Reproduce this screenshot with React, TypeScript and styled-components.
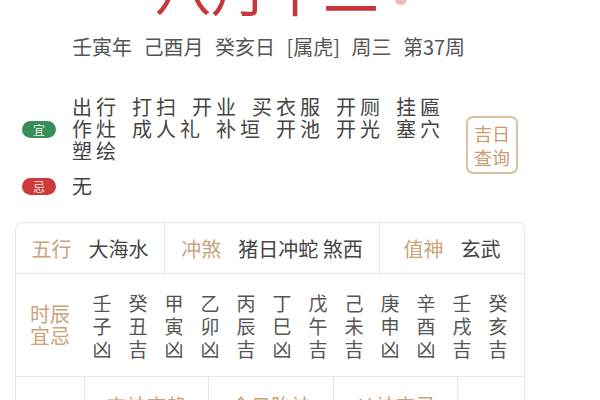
import React from "react";
import styled, { createGlobalStyle } from "styled-components";

const Global = createGlobalStyle`
  html, body { margin: 0; padding: 0; background: #ffffff; }
  body { font-family: "Noto Sans CJK SC", "Noto Sans", sans-serif; color: #444; overflow: hidden; }
`;

const Page = styled.div`
  width: 600px;
  height: 400px;
  overflow: hidden;
  background: #fff;
`;

const TitleRow = styled.div`
  height: 14px;
  width: 562px;
  display: flex;
  justify-content: center;
  align-items: flex-end;
  overflow: visible;
`;

const Title = styled.div`
  font-size: 56px;
  line-height: 56px;
  color: #c8363a;
  margin-bottom: -1px;
  display: flex;
  align-items: center;
  gap: 16px;
`;

const Dot = styled.span`
  width: 12px;
  height: 12px;
  border-radius: 50%;
  background: #f3b9b9;
  align-self: flex-start;
  margin-top: 34px;
`;

const DateLine = styled.div`
  margin-top: 19px;
  padding-left: 72px;
  font-size: 20px;
  line-height: 28px;
  color: #555;
  word-spacing: 7px;
  white-space: nowrap;
`;

const Advice = styled.div`
  margin-top: 35px;
  display: flex;
  align-items: center;
  width: 540px;
`;

const AdviceRows = styled.div`
  display: flex;
  flex-direction: column;
  gap: 13px;
`;

const AdviceRow = styled.div`
  display: flex;
  align-items: center;
  padding-left: 22px;
`;

const Pill = styled.span<{ $tone: "good" | "bad" }>`
  width: 34px;
  height: 17px;
  border-radius: 9px;
  background: ${(p) => (p.$tone === "good" ? "#358f57" : "#cc3a3a")};
  color: #fbeaea;
  font-size: 12px;
  line-height: 17px;
  text-align: center;
  flex-shrink: 0;
`;

const Words = styled.div`
  margin-left: 16px;
  width: 380px;
  display: flex;
  flex-wrap: wrap;
  column-gap: 12px;
  font-size: 20px;
  line-height: 22px;
  color: #444;
`;

const Word = styled.span`
  letter-spacing: 4px;
  white-space: nowrap;
`;

const LuckyButton = styled.div`
  margin-left: 14px;
  width: 48px;
  height: 54px;
  border: 2px solid #dcc0a0;
  border-radius: 7px;
  color: #c99c6e;
  font-size: 18px;
  line-height: 24px;
  display: flex;
  flex-direction: column;
  align-items: center;
  justify-content: center;
  margin-top: -4px;
`;

const Table = styled.div`
  margin: 25px 0 0 15px;
  width: 508px;
  border: 1px solid #e8e6e3;
  border-radius: 7px;
`;

const TRow = styled.div<{ $cols: string; $h?: number }>`
  display: grid;
  grid-template-columns: ${(p) => p.$cols};
  min-height: ${(p) => p.$h ?? 50}px;
  & + & { border-top: 1px solid #e8e6e3; }
`;

const Cell = styled.div<{ $divider?: boolean }>`
  display: flex;
  align-items: center;
  justify-content: center;
  gap: 17px;
  font-size: 20px;
  color: #444;
  border-left: ${(p) => (p.$divider ? "1px solid #e8e6e3" : "none")};
`;

const Label = styled.span`
  color: #c9a37b;
`;

const HoursLabel = styled.div`
  display: flex;
  align-items: center;
  justify-content: center;
  font-size: 20px;
  line-height: 22px;
  color: #c9a37b;
  text-align: center;
`;

const Hours = styled.div`
  display: grid;
  grid-template-columns: repeat(12, 36px);
  align-content: center;
  padding-right: 10px;
`;

const HourCol = styled.div`
  display: flex;
  flex-direction: column;
  align-items: center;
  font-size: 19px;
  line-height: 23px;
  color: #555;
`;

const TopCell = styled(Cell)`
  align-items: flex-start;
  padding-top: 14px;
  color: #c9a37b;
`;

const yi = ["出行", "打扫", "开业", "买衣服", "开厕", "挂匾", "作灶", "成人礼", "补垣", "开池", "开光", "塞穴", "塑绘"];
const hours = ["壬子凶", "癸丑吉", "甲寅凶", "乙卯凶", "丙辰吉", "丁巳凶", "戊午吉", "己未吉", "庚申凶", "辛酉凶", "壬戌吉", "癸亥吉"];

export default function App() {
  return (
    <Page>
      <Global />
      <TitleRow>
        <Title>
          八月十二
          <Dot />
        </Title>
      </TitleRow>
      <DateLine>壬寅年 己酉月 癸亥日 [属虎] 周三 第37周</DateLine>
      <Advice>
        <AdviceRows>
          <AdviceRow>
            <Pill $tone="good">宜</Pill>
            <Words>
              {yi.map((w) => (
                <Word key={w}>{w}</Word>
              ))}
            </Words>
          </AdviceRow>
          <AdviceRow>
            <Pill $tone="bad">忌</Pill>
            <Words>
              <Word>无</Word>
            </Words>
          </AdviceRow>
        </AdviceRows>
        <LuckyButton>
          <span>吉日</span>
          <span>查询</span>
        </LuckyButton>
      </Advice>
      <Table>
        <TRow $cols="148px 215px 1fr">
          <Cell>
            <Label>五行</Label>
            <span>大海水</span>
          </Cell>
          <Cell $divider>
            <Label>冲煞</Label>
            <span>猪日冲蛇 煞西</span>
          </Cell>
          <Cell $divider>
            <Label>值神</Label>
            <span>玄武</span>
          </Cell>
        </TRow>
        <TRow $cols="68px 1fr" $h={102}>
          <HoursLabel>
            时辰
            <br />
            宜忌
          </HoursLabel>
          <Hours>
            {hours.map((h, i) => (
              <HourCol key={i}>
                {h.split("").map((c, j) => (
                  <span key={j}>{c}</span>
                ))}
              </HourCol>
            ))}
          </Hours>
        </TRow>
        <TRow $cols="68px 124px 125px 124px 1fr" $h={60}>
          <TopCell />
          <TopCell $divider>吉神宜趋</TopCell>
          <TopCell $divider>今日胎神</TopCell>
          <TopCell $divider>凶神宜忌</TopCell>
          <TopCell $divider />
        </TRow>
      </Table>
    </Page>
  );
}
